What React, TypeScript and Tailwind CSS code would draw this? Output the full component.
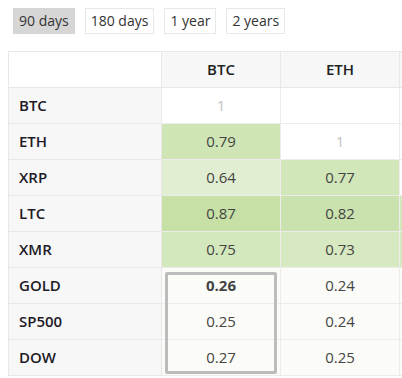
import React from 'react';

const periods = ['90 days', '180 days', '1 year', '2 years'];

const cols = ['BTC', 'ETH'];

// null = empty cell, 1 = diagonal
const rows: { name: string; values: (number | null)[]; next: string }[] = [
  { name: 'BTC', values: [1, null], next: 'bg-white' },
  { name: 'ETH', values: [0.79, 1], next: 'bg-white' },
  { name: 'XRP', values: [0.64, 0.77], next: 'bg-white' },
  { name: 'LTC', values: [0.87, 0.82], next: 'bg-[#d3e8bd]' },
  { name: 'XMR', values: [0.75, 0.73], next: 'bg-[#d6e9c1]' },
  { name: 'GOLD', values: [0.26, 0.24], next: 'bg-[#fbfcf8]' },
  { name: 'SP500', values: [0.25, 0.24], next: 'bg-[#fbfcf8]' },
  { name: 'DOW', values: [0.27, 0.25], next: 'bg-[#fbfcf8]' },
];

const cellBg = (v: number | null) => {
  if (v === null || v === 1) return 'bg-white';
  if (v >= 0.85) return 'bg-[#c6e0a6]';
  if (v >= 0.8) return 'bg-[#cae2ae]';
  if (v >= 0.78) return 'bg-[#cfe5b6]';
  if (v >= 0.76) return 'bg-[#d1e6b9]';
  if (v >= 0.74) return 'bg-[#d3e8bd]';
  if (v >= 0.7) return 'bg-[#d6e9c1]';
  if (v >= 0.6) return 'bg-[#e1eed2]';
  return 'bg-[#fbfcf8]';
};

const App = () => {
  const [active, setActive] = React.useState(0);

  return (
    <div className="w-[402px] h-[378px] overflow-hidden bg-white font-['Open_Sans',sans-serif] text-[15px]">
      <div className="flex gap-[10px] pl-[13px] pt-[8px]">
        {periods.map((p, i) => (
          <button
            key={p}
            onClick={() => setActive(i)}
            className={
              'h-[26px] px-[5px] leading-[24px] border text-[14px] text-[#333] ' +
              (i === active ? 'bg-[#d6d6d6] border-[#d6d6d6]' : 'bg-white border-[#e8e8e8]')
            }
          >
            {p}
          </button>
        ))}
      </div>

      <div className="relative ml-[8px] mt-[17px] w-max">
        <table className="border-collapse table-fixed">
          <thead>
            <tr className="h-[36px]">
              <th className="w-[153px] border border-[#e8e8e8] bg-white"></th>
              {cols.map((c) => (
                <th key={c} className="w-[119px] border border-[#e8e8e8] bg-[#f7f7f8] font-semibold text-[#222]">
                  {c}
                </th>
              ))}
              {/* next column, cut off by the viewport */}
              <th className="w-[119px] border border-[#e8e8e8] bg-[#f7f7f8]"></th>
            </tr>
          </thead>
          <tbody>
            {rows.map((r) => (
              <tr key={r.name} className="h-[36px]">
                <td className="border border-[#e8e8e8] bg-[#f7f7f8] pl-[10px] font-semibold text-[#1e1a26]">
                  {r.name}
                </td>
                {r.values.map((v, j) => (
                  <td
                    key={j}
                    className={
                      'border border-[#ececec] text-center ' +
                      cellBg(v) +
                      (v === 1 ? ' text-[#c4c4c4]' : ' text-[#444]') +
                      (r.name === 'GOLD' && j === 0 ? ' font-bold text-[#222]' : '')
                    }
                  >
                    {v === null ? '' : v === 1 ? '1' : v.toFixed(2)}
                  </td>
                ))}
                <td className={'border border-[#ececec] ' + r.next}></td>
              </tr>
            ))}
          </tbody>
        </table>
        {/* selection box over BTC column, GOLD..DOW */}
        <div className="absolute left-[157px] top-[221px] w-[112px] h-[102px] border-[3px] border-[#bcbcbc] rounded-[2px] pointer-events-none" />
      </div>
    </div>
  );
};

export default App;
